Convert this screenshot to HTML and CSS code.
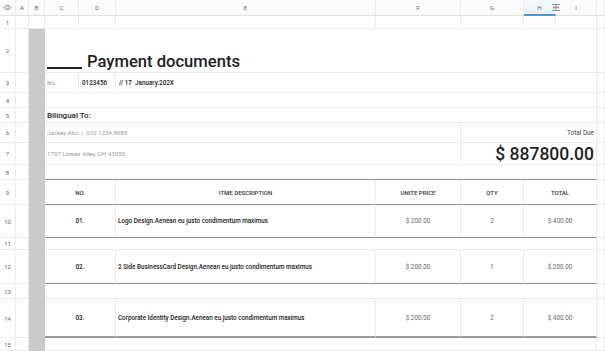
FILE: index.html
```html
<!DOCTYPE html>
<html lang="en">
<head>
  <meta charset="UTF-8">
  <title>Payment documents</title>
  <meta name="viewport" content="width=device-width, initial-scale=1.0">
  <link rel="stylesheet" href="styles.css">
</head>
<body>
  <div class="sheet">
    <!-- column headers -->
    <div class="ch corner">
      <svg width="9" height="7" viewBox="0 0 9 7"><path d="M0.6 3.5 Q4.5 -1 8.4 3.5 Q4.5 8 0.6 3.5 Z" fill="none" stroke="#9a9a9a" stroke-width="0.9"/><circle cx="4.5" cy="3.5" r="1.3" fill="none" stroke="#9a9a9a" stroke-width="0.9"/></svg>
    </div>
    <div class="ch">A</div>
    <div class="ch">B</div>
    <div class="ch">C</div>
    <div class="ch">D</div>
    <div class="ch">E</div>
    <div class="ch">F</div>
    <div class="ch">G</div>
    <div class="ch active">H
      <span class="resize">
        <svg width="10" height="9" viewBox="0 0 10 9"><path d="M1 1.5H9M1 7.5H9M5 1.5V7.5M2 4.5H8M2 4.5L3.3 3.3M2 4.5L3.3 5.7M8 4.5L6.7 3.3M8 4.5L6.7 5.7" fill="none" stroke="#8a8a8a" stroke-width="0.9"/></svg>
      </span>
    </div>
    <div class="ch">I</div>
    <div class="ch"></div>

    <!-- row 1 -->
    <div class="rh">1</div>
    <div></div><div></div><div></div><div></div><div></div><div></div><div></div><div></div><div></div><div></div>

    <!-- row 2 -->
    <div class="rh">2</div>
    <div></div><div class="gap"></div>
    <div class="span7 title"><span class="dash"></span>Payment documents</div>
    <div></div>

    <!-- row 3 -->
    <div class="rh">3</div>
    <div></div><div class="gap"></div>
    <div class="muted">No.</div>
    <div class="num">0123456</div>
    <div class="span5 num">// 17&nbsp; January.202X</div>
    <div></div>

    <!-- row 4 -->
    <div class="rh">4</div>
    <div></div><div class="gap"></div>
    <div class="span7"></div>
    <div></div>

    <!-- row 5 -->
    <div class="rh">5</div>
    <div></div><div class="gap"></div>
    <div class="span7 label">Bilingual To:</div>
    <div></div>

    <!-- row 6 -->
    <div class="rh">6</div>
    <div></div><div class="gap"></div>
    <div class="span4 muted">Jackey.Abc &nbsp;|&nbsp; 010 1234 8989</div>
    <div class="span3 right small">Total Due</div>
    <div></div>

    <!-- row 7 -->
    <div class="rh">7</div>
    <div></div><div class="gap"></div>
    <div class="span4 muted">1707 Lowes Alley, OH 43055</div>
    <div class="span3 right amount">$ 887800.00</div>
    <div></div>

    <!-- row 8 -->
    <div class="rh">8</div>
    <div></div><div class="gap"></div>
    <div class="span7 rule"></div>
    <div></div>

    <!-- row 9: table head -->
    <div class="rh">9</div>
    <div></div><div class="gap"></div>
    <div class="span2 th rule">NO.</div>
    <div class="th rule">ITME DESCRIPTION</div>
    <div class="th rule">UNITE PRICE</div>
    <div class="th rule">QTY</div>
    <div class="span2 th rule">TOTAL</div>
    <div></div>

    <!-- row 10 -->
    <div class="rh">10</div>
    <div></div><div class="gap"></div>
    <div class="span2 center item rule">01.</div>
    <div class="item rule">Logo Design.Aenean eu justo condimentum maximus</div>
    <div class="center cell-val rule">$ 200.00</div>
    <div class="center cell-val rule">2</div>
    <div class="span2 center cell-val rule">$ 400.00</div>
    <div></div>

    <!-- row 11 -->
    <div class="rh">11</div>
    <div></div><div class="gap"></div>
    <div class="span7"></div>
    <div></div>

    <!-- row 12 -->
    <div class="rh">12</div>
    <div></div><div class="gap"></div>
    <div class="span2 center item rule">02.</div>
    <div class="item rule">2 Side BusinessCard Design.Aenean eu justo condimentum maximus</div>
    <div class="center cell-val rule">$ 200.00</div>
    <div class="center cell-val rule">1</div>
    <div class="span2 center cell-val rule">$ 200.00</div>
    <div></div>

    <!-- row 13 -->
    <div class="rh">13</div>
    <div></div><div class="gap"></div>
    <div class="span7"></div>
    <div></div>

    <!-- row 14 -->
    <div class="rh">14</div>
    <div></div><div class="gap"></div>
    <div class="span2 center item rule2">03.</div>
    <div class="item rule2">Corporate Identity Design.Aenean eu justo condimentum maximus</div>
    <div class="center cell-val rule2">$ 200.00</div>
    <div class="center cell-val rule2">2</div>
    <div class="span2 center cell-val rule2">$ 400.00</div>
    <div></div>

    <!-- row 15 -->
    <div class="rh">15</div>
    <div></div><div class="gap"></div>
    <div class="span7"></div>
    <div></div>
  </div>
</body>
</html>
```

FILE: styles.css
```css
html, body { margin: 0; height: 100%; overflow: hidden; background: #fff; }
body { font-family: Roboto, "Noto Sans", sans-serif; color: #222; }

.sheet {
  display: grid;
  grid-template-columns: 16px 13px 16px 34px 37px 260px 85px 63px 32px 41px 1fr;
  grid-template-rows: 16px 13px 44px 20px 15px 15px 20px 22px 15px 25px 33px 12px 34px 15px 39px 1fr;
  height: 351px;
}
.sheet > div {
  box-sizing: border-box;
  border-right: 1px solid #ebebeb;
  border-bottom: 1px solid #ebebeb;
  display: flex;
  align-items: center;
  min-width: 0;
  white-space: nowrap;
}

/* headers */
.ch, .rh { justify-content: center; font-size: 6px; color: #666; }
.ch { background: #fbfbfb; border-bottom-color: #e2e2e2 !important; }
.ch.active {
  position: relative;
  background: linear-gradient(#f4f9ff, #e6f1fd);
  border-bottom: 2px solid #3d9bf2 !important;
}
.resize { position: absolute; right: -6px; top: 3px; display: flex; }
.corner svg { display: block; }

.gap { background: #c9cacc; border-color: #c9cacc !important; }

/* merged cells */
.span2 { grid-column: span 2; }
.span3 { grid-column: span 3; }
.span4 { grid-column: span 4; }
.span5 { grid-column: span 5; }
.span7 { grid-column: span 7; }

.title {
  align-items: flex-end !important;
  padding: 0 0 1px 2px;
  font-size: 16.6px;
  font-weight: 500;
  color: #1e1e1e;
}
.dash { display: inline-block; width: 35px; height: 1.6px; background: #222; margin: 0 5px 2px 0; }

.muted { padding-left: 2px; font-size: 6.2px; color: #9a9a9a; }
.num { padding-left: 3px; font-size: 6.3px; font-weight: 500; color: #222; }
.label { padding-left: 2px; font-size: 8px; font-weight: 500; color: #1e1e1e; }
.right { justify-content: flex-end; padding-right: 2px; }
.small { font-size: 6.4px; color: #444; }
.amount { font-size: 17.5px; font-weight: 500; color: #1e1e1e; }

.th { justify-content: center; font-size: 6px; font-weight: 500; color: #333; }
.center { justify-content: center; }
.item { padding-left: 2px; font-size: 6.3px; font-weight: 500; color: #222; }
.item.center { padding-left: 0; }
.cell-val { font-size: 6.3px; color: #666; }

.rule { border-bottom-color: #8e8e8e !important; }
.rule2 { border-bottom: 2px solid #9a9a9a !important; }
```
